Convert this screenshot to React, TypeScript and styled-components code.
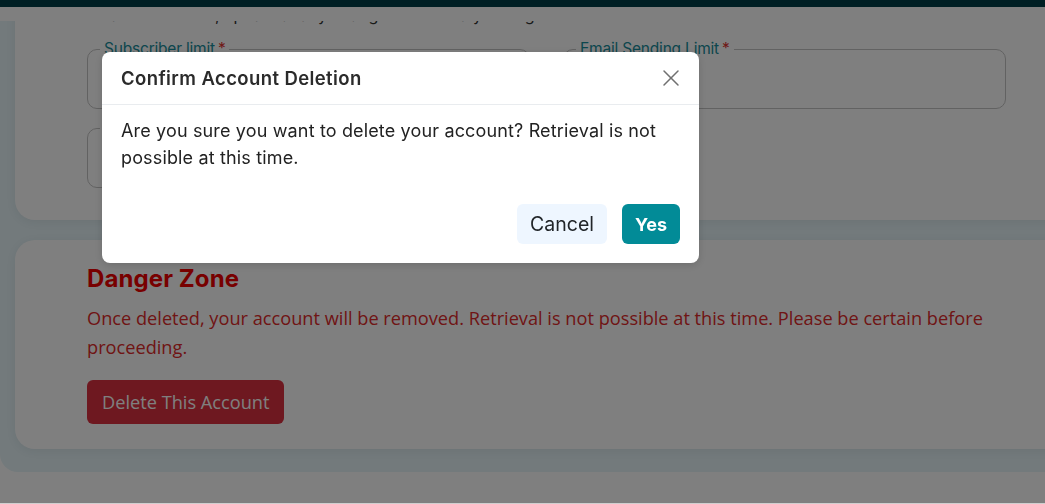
import React from "react";
import styled, { createGlobalStyle } from "styled-components";

const GlobalStyle = createGlobalStyle`
  html, body {
    margin: 0;
    padding: 0;
    height: 100%;
    overflow: hidden;
    background: #ffffff;
  }
  #root { height: 100%; }
  * { box-sizing: border-box; }
`;

const Page = styled.div`
  height: 504px;
  display: flex;
  flex-direction: column;
  font-family: "Open Sans", sans-serif;
`;

const TopBar = styled.div`
  position: relative;
  z-index: 2;
  flex: none;
  height: 7px;
  background: #003f49;
`;

const HeaderStrip = styled.div`
  position: relative;
  z-index: 2;
  flex: none;
  height: 14px;
  background: #ffffff;
`;

const Main = styled.main`
  position: relative;
  z-index: 1;
  flex: none;
  width: 1093px;
  height: 451px;
  background: #e6f4f8;
  border-bottom-left-radius: 18px;
  overflow: hidden;
  padding: 0 15px 23px 15px;
`;

const Scrolled = styled.div`
  margin-top: -42px;
  display: flex;
  flex-direction: column;
  gap: 20px;
`;

const Card = styled.section<{ $pad: string }>`
  background: #ffffff;
  border-radius: 20px;
  box-shadow: 0 2px 10px rgba(40, 70, 80, 0.08);
  padding: ${(p) => p.$pad};
`;

const Intro = styled.p`
  margin: 0 0 14px;
  font-family: "Inter", sans-serif;
  font-size: 16px;
  line-height: 24px;
  color: #333;
  white-space: nowrap;
`;

const FieldGrid = styled.div`
  display: grid;
  grid-template-columns: 443px 443px;
  column-gap: 33px;
  row-gap: 11px;
`;

const Field = styled.fieldset`
  margin: 0;
  height: 68px;
  padding: 0 12px 0 12px;
  border: 1px solid #c4c4c4;
  border-radius: 10px;
`;

const Legend = styled.legend`
  padding: 0 4px;
  font-family: "Inter", sans-serif;
  font-size: 15.5px;
  line-height: 16px;
  letter-spacing: -0.2px;
  color: #1a8e9c;
`;

const Req = styled.span`
  color: #e0312f;
  margin-left: 3px;
`;

const DangerTitle = styled.h2`
  margin: 0 0 10px;
  font-family: "Inter", sans-serif;
  font-weight: 700;
  font-size: 24px;
  line-height: 30px;
  letter-spacing: 0.1px;
  color: #f00000;
`;

const DangerText = styled.p`
  margin: 0 0 18px;
  font-family: "Open Sans", sans-serif;
  font-size: 18.2px;
  line-height: 29px;
  color: #e02a2a;
`;

const DangerButton = styled.button`
  height: 44px;
  padding: 0 15px;
  border: none;
  border-radius: 6px;
  background: #dc3040;
  color: #ffffff;
  font-family: "Open Sans", sans-serif;
  font-size: 18.2px;
`;

const Footer = styled.div`
  flex: 1;
  background: #ffffff;
  border-bottom: 1px solid #cfcfcf;
`;

const Overlay = styled.div`
  position: fixed;
  z-index: 10;
  left: 0;
  right: 0;
  top: 0;
  bottom: 1px;
  background: rgba(0, 0, 0, 0.5);
`;

const Modal = styled.div`
  position: fixed;
  z-index: 11;
  left: 102px;
  top: 52px;
  width: 597px;
  background: #ffffff;
  border-radius: 8px;
  font-family: "Inter", sans-serif;
  color: #212529;
  box-shadow: 0 2px 8px rgba(0, 0, 0, 0.15);
`;

const ModalHeader = styled.div`
  height: 53px;
  display: flex;
  align-items: center;
  justify-content: space-between;
  padding: 0 17px 0 19px;
  border-bottom: 1px solid #e9ecef;
`;

const ModalTitle = styled.h3`
  margin: 0;
  font-size: 18.5px;
  font-weight: 600;
  letter-spacing: 0.4px;
  color: #2b2b2b;
`;

const CloseButton = styled.button`
  width: 22px;
  height: 22px;
  padding: 0;
  border: none;
  background: transparent;
  display: flex;
  align-items: center;
  justify-content: center;
  color: #707070;
`;

const ModalBody = styled.div`
  padding: 12px 19px;
  font-size: 18px;
  line-height: 27px;
  letter-spacing: 0.15px;
  color: #222;
`;

const ModalFooter = styled.div`
  display: flex;
  justify-content: flex-end;
  gap: 15px;
  padding: 21px 19px 19px;
`;

const ModalButton = styled.button<{ $primary?: boolean }>`
  height: 40px;
  padding: 0 13px;
  border: none;
  border-radius: 6px;
  font-family: "Inter", sans-serif;
  font-size: ${(p) => (p.$primary ? "18px" : "19.5px")};
  font-weight: ${(p) => (p.$primary ? 700 : 400)};
  background: ${(p) => (p.$primary ? "#028b97" : "#eef6ff")};
  color: ${(p) => (p.$primary ? "#ffffff" : "#212529")};
`;

export default function App() {
  return (
    <>
      <GlobalStyle />
      <Page>
        <TopBar />
        <HeaderStrip />
        <Main>
          <Scrolled>
            <Card $pad="24px 72px 32px">
              <Intro>All account limits, update at any change to limit via your login.</Intro>
              <FieldGrid>
                <Field>
                  <Legend>
                    Subscriber limit<Req>*</Req>
                  </Legend>
                </Field>
                <Field>
                  <Legend>
                    Email Sending Limit<Req>*</Req>
                  </Legend>
                </Field>
                <Field>
                  <Legend>
                    Plan<Req>*</Req>
                  </Legend>
                </Field>
              </FieldGrid>
            </Card>
            <Card $pad="24px 72px 25px">
              <DangerTitle>Danger Zone</DangerTitle>
              <DangerText>
                Once deleted, your account will be removed. Retrieval is not possible at this time. Please be
                certain before proceeding.
              </DangerText>
              <DangerButton>Delete This Account</DangerButton>
            </Card>
          </Scrolled>
        </Main>
        <Footer />
      </Page>
      <Overlay />
      <Modal role="dialog">
        <ModalHeader>
          <ModalTitle>Confirm Account Deletion</ModalTitle>
          <CloseButton aria-label="Close">
            <svg width="18" height="18" viewBox="0 0 18 18" fill="none" stroke="currentColor" strokeWidth="1.5" strokeLinecap="round">
              <line x1="2" y1="2" x2="16" y2="16" />
              <line x1="16" y1="2" x2="2" y2="16" />
            </svg>
          </CloseButton>
        </ModalHeader>
        <ModalBody>
          Are you sure you want to delete your account? Retrieval is not possible at this time.
        </ModalBody>
        <ModalFooter>
          <ModalButton>Cancel</ModalButton>
          <ModalButton $primary>Yes</ModalButton>
        </ModalFooter>
      </Modal>
    </>
  );
}
